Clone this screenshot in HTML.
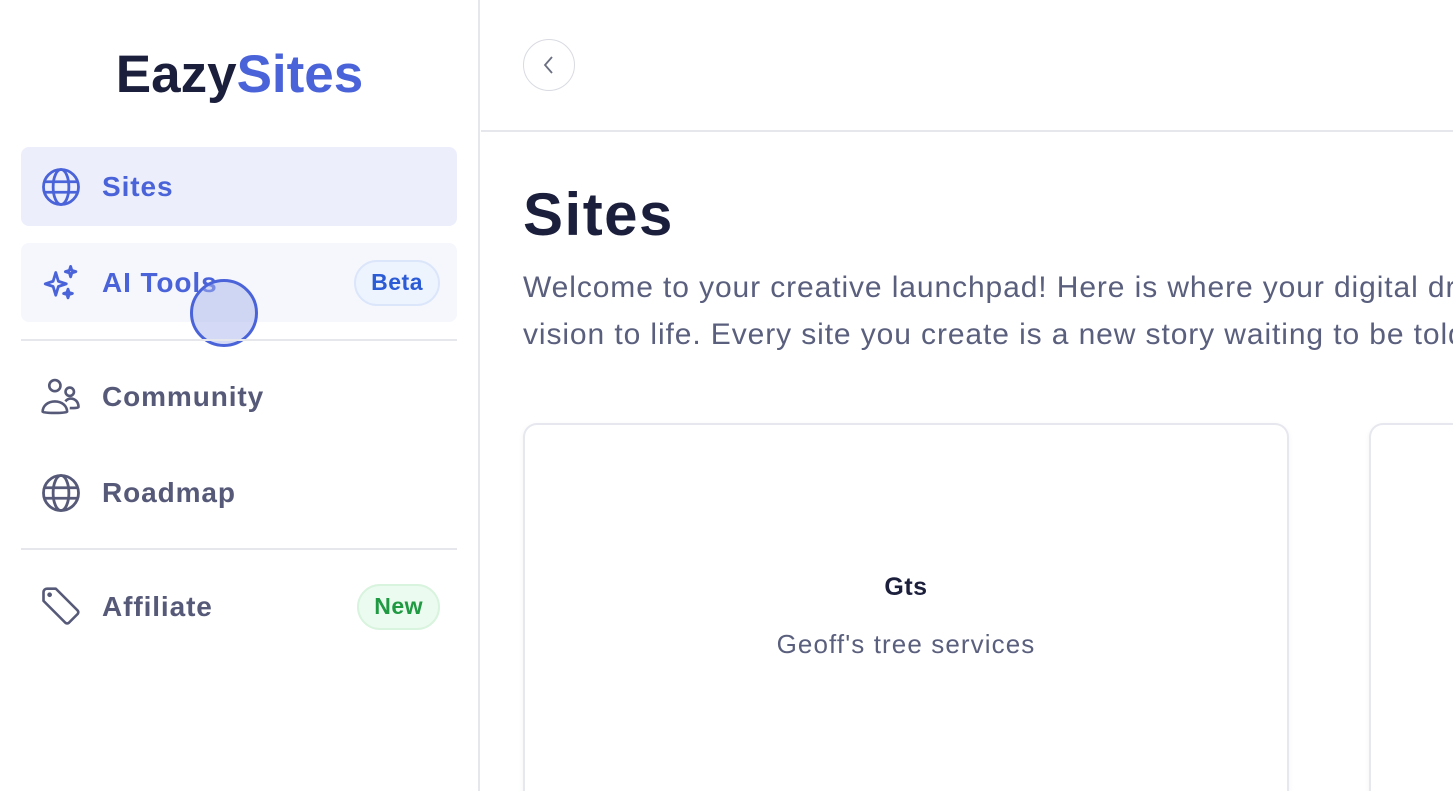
<!DOCTYPE html>
<html style="width:1453px;height:791px;overflow:hidden"><head><meta charset="utf-8"><style>
*{margin:0;padding:0;box-sizing:border-box}
body{width:1453px;height:791px;overflow:hidden;background:#fff;font-family:"Liberation Sans",sans-serif;position:relative}
.side{position:absolute;left:0;top:0;width:480px;height:791px;border-right:2px solid #e6e7ec}
.logo{position:absolute;left:0;width:479px;top:44px;text-align:center;font-size:53px;font-weight:900;letter-spacing:0px;color:#1b1f3b}
.logo span{color:#4a63d9}
.item{position:absolute;left:21px;width:436px;height:79px;border-radius:8px;display:flex;align-items:center;font-size:28px;font-weight:bold;color:#565a78;letter-spacing:.9px}
.item svg{position:absolute;left:19px;width:42px;height:42px}
.item .t{position:absolute;left:81px}
.badge{position:absolute;right:17px;height:46px;border-radius:23px;padding:0 15px;display:flex;align-items:center;font-size:23px;font-weight:bold;letter-spacing:.5px}
.div{position:absolute;left:21px;width:436px;height:2px;background:#e6e7ec}
.main{position:absolute;left:481px;top:0;width:972px;height:791px;overflow:hidden}
.top{position:absolute;left:0;top:130px;width:972px;height:2px;background:#e6e7ec}
.back{position:absolute;left:42px;top:39px;width:52px;height:52px;border-radius:50%;border:1.5px solid #d9dbe2;display:flex;align-items:center;justify-content:center}
h1{position:absolute;left:42px;top:180px;font-size:60px;font-weight:bold;color:#1b1f3b;letter-spacing:1.5px}
p{position:absolute;left:42px;top:264px;font-size:30px;line-height:47px;color:#5a5f7d;white-space:nowrap;letter-spacing:.9px}
.card{position:absolute;top:423px;height:380px;border:2px solid #e6e7ef;border-bottom:none;border-radius:14px 14px 0 0;box-shadow:0 2px 6px rgba(0,0,0,.05)}
</style></head><body>
<div class="side">
<div class="logo">Eazy<span>Sites</span></div>
<div class="item" style="top:147px;background:#eceffb;color:#4a63d9">
<svg viewBox="0 0 24 24" fill="none" stroke="#4a63d9" stroke-width="1.6"><circle cx="12" cy="12" r="10"/><ellipse cx="12" cy="12" rx="4.5" ry="10"/><path d="M2.5 9h19M2.5 15h19"/></svg>
<span class="t">Sites</span></div>
<div class="item" style="top:243px;background:#f5f7fd;color:#4a63d9">
<svg viewBox="0 0 24 24" fill="none" stroke="#4a63d9" stroke-width="1.6" stroke-linejoin="round"><path d="M9 6 L10.5 11 L15 12.5 L10.5 14 L9 19 L7.5 14 L3 12.5 L7.5 11Z"/><path d="M17.5 2.5 L18.2 4.8 L20.5 5.5 L18.2 6.2 L17.5 8.5 L16.8 6.2 L14.5 5.5 L16.8 4.8Z"/><path d="M16 15.5 L16.6 17.4 L18.5 18 L16.6 18.6 L16 20.5 L15.4 18.6 L13.5 18 L15.4 17.4Z"/></svg>
<span class="t">AI Tools</span>
<span class="badge" style="background:#eef4fe;border:2px solid #dbe6fb;color:#2c5bd6">Beta</span></div>
<div style="position:absolute;left:190px;top:279px;width:68px;height:68px;border-radius:50%;background:rgba(170,182,235,.5);border:3px solid #4a63d9"></div>
<div class="div" style="top:339px"></div>
<div class="item" style="top:357px">
<svg viewBox="0 0 24 24" fill="none" stroke="#565a78" stroke-width="1.5"><circle cx="8.5" cy="5.5" r="3.2"/><circle cx="17" cy="9" r="2.4"/><path d="M1.5 20.5c0-3.5 3-6 7-6s7 2.5 7 6c0 .8-14 .8-14 0z"/><path d="M14.5 14.5c.8-1 1.8-1.6 3-1.6 2.7 0 4.5 2 4.5 4.8 0 .6-3 .7-5 .6"/></svg>
<span class="t">Community</span></div>
<div class="item" style="top:453px">
<svg viewBox="0 0 24 24" fill="none" stroke="#565a78" stroke-width="1.6"><circle cx="12" cy="12" r="10"/><ellipse cx="12" cy="12" rx="4.5" ry="10"/><path d="M2.5 9h19M2.5 15h19"/></svg>
<span class="t">Roadmap</span></div>
<div class="div" style="top:548px"></div>
<div class="item" style="top:567px">
<svg viewBox="0 0 24 24" fill="none" stroke="#565a78" stroke-width="1.5" stroke-linejoin="round"><path d="M2 3.5v5l12.5 12.5a1.5 1.5 0 0 0 2 0l5-5a1.5 1.5 0 0 0 0-2L9 1.5H4a2 2 0 0 0-2 2z"/><circle cx="5.5" cy="5" r=".6" fill="#565a78"/></svg>
<span class="t">Affiliate</span>
<span class="badge" style="background:#ecfbef;border:2px solid #d8f3de;color:#1f9a43">New</span></div>
</div>
<div class="main">
<div class="back"><svg width="16" height="22" viewBox="0 0 16 22" fill="none" stroke="#6b6f82" stroke-width="1.8"><path d="M11 3 L4 11 L11 19"/></svg></div>
<div class="top"></div>
<h1>Sites</h1>
<p>Welcome to your creative launchpad! Here is where your digital dreams<br>vision to life. Every site you create is a new story waiting to be told.</p>
<div class="card" style="left:42px;width:766px">
<div style="position:absolute;top:148px;width:100%;text-align:center;font-size:25px;font-weight:bold;color:#1b1f3b;letter-spacing:.5px">Gts</div>
<div style="position:absolute;top:204px;width:100%;text-align:center;font-size:26px;color:#5a5f7d;letter-spacing:1.1px">Geoff's tree services</div>
</div>
<div class="card" style="left:888px;width:120px"></div>
</div>
</body></html>
